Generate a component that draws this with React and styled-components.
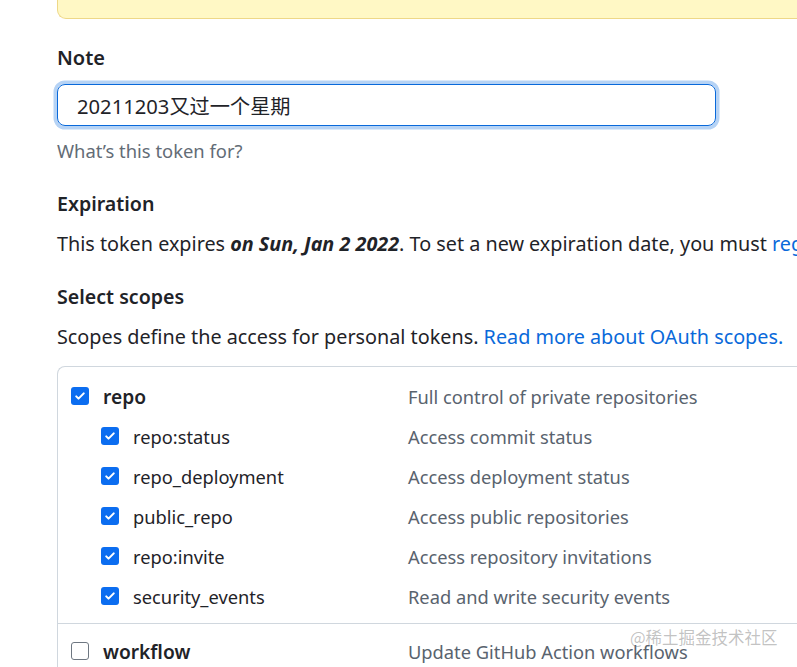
import React from 'react';
import styled, { createGlobalStyle } from 'styled-components';

const GlobalStyle = createGlobalStyle`
    body {
        margin: 0;
        background: #ffffff;
        font-family: "Noto Sans", "Noto Sans CJK SC", sans-serif;
        color: #1f2328;
        overflow: hidden;
    }
`;

const scopes = [
    { name: 'repo', desc: 'Full control of private repositories', checked: true, top: true },
    { name: 'repo:status', desc: 'Access commit status', checked: true },
    { name: 'repo_deployment', desc: 'Access deployment status', checked: true },
    { name: 'public_repo', desc: 'Access public repositories', checked: true },
    { name: 'repo:invite', desc: 'Access repository invitations', checked: true },
    { name: 'security_events', desc: 'Read and write security events', checked: true },
];

const CheckIcon = () => (
    <svg width="12" height="12" viewBox="0 0 16 16" fill="none">
        <path d="M3 8.5l3 3 7-7" stroke="#ffffff" strokeWidth="2.8" strokeLinecap="round" strokeLinejoin="round" />
    </svg>
);

const ScopeRow = ({ name, desc, checked, top }) => (
    <Row>
        <NameCell $top={top}>
            <Box $checked={checked}>{checked && <CheckIcon />}</Box>
            <Name $top={top}>{name}</Name>
        </NameCell>
        <Desc>{desc}</Desc>
    </Row>
);

const App = () => {
    return (
        <Page>
            <GlobalStyle />
            <Banner />
            <Label>Note</Label>
            <InputWrap>
                <NoteInput>20211203又过一个星期</NoteInput>
            </InputWrap>
            <Hint>What’s this token for?</Hint>
            <Heading>Expiration</Heading>
            <Text>
                This token expires <em><b>on Sun, Jan 2 2022</b></em>. To set a new expiration date, you must <Link>regenerate the token</Link>
            </Text>
            <Heading>Select scopes</Heading>
            <Text>
                Scopes define the access for personal tokens. <Link>Read more about OAuth scopes.</Link>
            </Text>
            <ScopeBox>
                <Group>
                    {scopes.map((s) => (
                        <ScopeRow key={s.name} {...s} />
                    ))}
                </Group>
                <Group $last>
                    <ScopeRow name="workflow" desc="Update GitHub Action workflows" checked={false} top />
                </Group>
            </ScopeBox>
            <Watermark>@稀土掘金技术社区</Watermark>
        </Page>
    );
};

export default App;

const Page = styled.div`
    position: relative;
    display: flow-root;
    height: 667px;
    overflow: hidden;
    padding-left: 57px;
    box-sizing: border-box;
    white-space: nowrap;
    font-size: 19.8px;
`;

const Banner = styled.div`
    height: 56px;
    margin-top: -38px;
    background: #fff8c5;
    border: 1px solid #eed888;
    border-top: none;
    border-radius: 0 0 0 9px;
    border-right: none;
`;

const Label = styled.div`
    margin-top: 25px;
    line-height: 28px;
    font-size: 20px;
    font-weight: 600;
`;

const InputWrap = styled.div`
    margin-top: 12px;
    width: 659px;
`;

const NoteInput = styled.div`
    box-sizing: border-box;
    height: 42px;
    padding: 0 19px;
    display: flex;
    align-items: center;
    border: 1.5px solid #0969da;
    border-radius: 8px;
    box-shadow: 0 0 0 3.5px #b6d3f5;
    font-size: 20.2px;
    color: #1f2328;
`;

const Hint = styled.div`
    margin-top: 11px;
    line-height: 28px;
    font-size: 18.4px;
    color: #636c76;
`;

const Heading = styled.div`
    margin-top: 25px;
    line-height: 28px;
    font-size: 19.6px;
    font-weight: 600;
`;

const Text = styled.div`
    margin-top: 12px;
    line-height: 28px;
    color: #1f2328;
`;

const Link = styled.span`
    color: #0969da;
`;

const ScopeBox = styled.div`
    margin-top: 15px;
    border: 1px solid #d0d7de;
    border-right: none;
    border-bottom: none;
    border-radius: 8px 0 0 0;
    font-size: 18.3px;
`;

const Group = styled.div`
    padding: ${(p) => (p.$last ? '7px 0 0' : '9px 0 7px')};
    border-bottom: ${(p) => (p.$last ? 'none' : '1px solid #d0d7de')};
`;

const Row = styled.div`
    display: flex;
    align-items: center;
    height: 40px;
`;

const NameCell = styled.div`
    display: flex;
    align-items: center;
    gap: 14px;
    width: 350px;
    box-sizing: border-box;
    padding-left: ${(p) => (p.$top ? '13px' : '43px')};
`;

const Box = styled.span`
    box-sizing: border-box;
    width: 18px;
    height: 18px;
    display: inline-flex;
    align-items: center;
    justify-content: center;
    border-radius: 3px;
    background: ${(p) => (p.$checked ? '#0b6df0' : '#ffffff')};
    border: ${(p) => (p.$checked ? 'none' : '1.5px solid #6e7781')};
`;

const Name = styled.span`
    font-weight: ${(p) => (p.$top ? 600 : 400)};
    font-size: ${(p) => (p.$top ? '19.2px' : '18.3px')};
    color: #1f2328;
`;

const Desc = styled.span`
    color: #59636e;
`;

const Watermark = styled.div`
    position: absolute;
    left: 630px;
    top: 624px;
    font-size: 16.5px;
    line-height: 26px;
    color: rgba(120, 120, 120, 0.45);
    font-family: "Noto Sans CJK SC", sans-serif;
`;
